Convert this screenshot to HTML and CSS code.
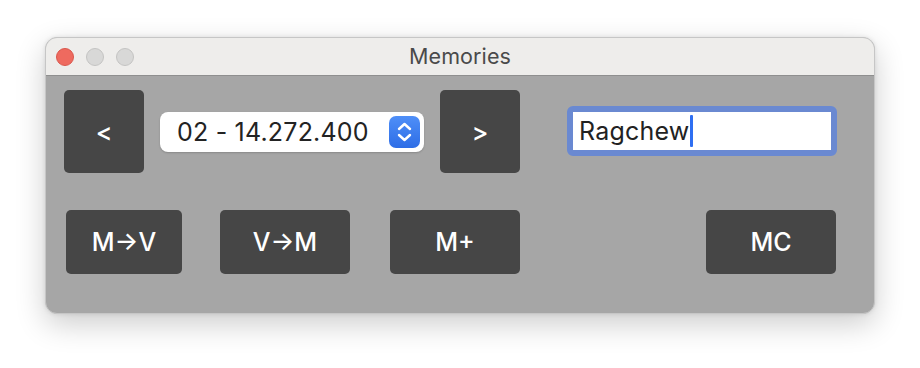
FILE: index.html
```html
<!DOCTYPE html>
<html>
<head>
<meta charset="utf-8">
<link rel="stylesheet" href="styles.css">
</head>
<body>
<div class="window">
  <div class="titlebar">
    <div class="lights">
      <span class="light red"></span>
      <span class="light grey"></span>
      <span class="light grey"></span>
    </div>
    <div class="title">Memories</div>
  </div>
  <div class="content">
    <div class="row top">
      <div class="btn nav">&lt;</div>
      <div class="popup">
        <span class="popup-text">02 - 14.272.400</span>
        <span class="stepper">
          <svg width="31" height="32" viewBox="0 0 31 32">
            <path d="M10 13 L15.5 8 L21 13" fill="none" stroke="#fff" stroke-width="2.4" stroke-linecap="round" stroke-linejoin="round"/>
            <path d="M10 19 L15.5 24 L21 19" fill="none" stroke="#fff" stroke-width="2.4" stroke-linecap="round" stroke-linejoin="round"/>
          </svg>
        </span>
      </div>
      <div class="btn nav">&gt;</div>
      <div class="field">
        <div class="field-inner"><span class="field-text">Ragchew</span><span class="caret"></span></div>
      </div>
    </div>
    <div class="row bottom">
      <div class="btn act mv">M→V</div>
      <div class="btn act vm">V→M</div>
      <div class="btn act mp">M+</div>
      <div class="btn act mc">MC</div>
    </div>
  </div>
</div>
</body>
</html>
```
FILE: styles.css
```css
html, body {
  margin: 0;
  padding: 0;
  background: #ffffff;
}
body {
  padding: 37px 0 0 45px;
  height: 368px;
  box-sizing: border-box;
  font-family: Inter, "Liberation Sans", "DejaVu Sans", sans-serif;
}
.window {
  width: 830px;
  height: 277px;
  box-sizing: border-box;
  border: 1px solid #c6c6c6;
  border-radius: 12px;
  overflow: hidden;
  background: #a6a6a6;
  box-shadow: 0 10px 30px rgba(0,0,0,0.2), 0 0 4px rgba(0,0,0,0.1);
  display: flex;
  flex-direction: column;
}
.titlebar {
  height: 37px;
  flex: none;
  background: #eeedeb;
  border-bottom: 1px solid #8f8f8f;
  position: relative;
  display: flex;
  align-items: center;
  justify-content: center;
}
.lights {
  position: absolute;
  left: 10px;
  top: 10px;
  display: flex;
  gap: 12px;
}
.light {
  width: 18px;
  height: 18px;
  border-radius: 50%;
  box-sizing: border-box;
}
.light.red {
  background: #ee6a5f;
  border: 1px solid #d9574c;
}
.light.grey {
  background: #d8d8d7;
  border: 1px solid #c3c3c2;
}
.title {
  font-size: 21.5px;
  color: #4a4a4a;
  letter-spacing: 0.1px;
  margin-top: -1px;
}
.content {
  padding: 14px 0 0 18px;
  display: flex;
  flex-direction: column;
}
.row {
  display: flex;
  align-items: center;
}
.row.top {
  height: 83px;
}
.row.bottom {
  margin-top: 37px;
}
.btn {
  background: #464646;
  color: #ffffff;
  border-radius: 5px;
  display: flex;
  align-items: center;
  justify-content: center;
  font-weight: 500;
}
.nav {
  width: 80px;
  height: 83px;
  font-size: 25px;
}
.popup {
  margin-left: 16px;
  width: 264px;
  height: 40px;
  box-sizing: border-box;
  background: #ffffff;
  border-radius: 8px;
  box-shadow: 0 1px 2px rgba(0,0,0,0.18);
  display: flex;
  align-items: center;
  padding: 0 4px 0 17px;
  margin-right: 16px;
}
.popup-text {
  font-size: 25px;
  color: #232323;
  flex: 1;
  letter-spacing: 0.2px;
}
.stepper {
  width: 31px;
  height: 32px;
  border-radius: 7px;
  background: linear-gradient(#4f8ff8, #2d6de6);
  display: flex;
}
.field {
  margin-left: 47px;
  width: 270px;
  height: 50px;
  box-sizing: border-box;
  border: 6px solid #6a89d1;
  border-radius: 6px;
  background: #ffffff;
  margin-top: -2px;
}
.field-inner {
  height: 100%;
  display: flex;
  align-items: center;
  padding-left: 6px;
}
.field-text {
  font-size: 25px;
  color: #222222;
  letter-spacing: 0.2px;
}
.caret {
  width: 3px;
  height: 32px;
  background: #2f6ff2;
  border-radius: 1px;
  margin-left: 1px;
}
.act {
  height: 64px;
  width: 130px;
  font-size: 25px;
}
.act.mv {
  width: 116px;
  margin-left: 2px;
}
.act.vm {
  margin-left: 38px;
}
.act.mp {
  margin-left: 40px;
}
.act.mc {
  margin-left: 186px;
}
```
